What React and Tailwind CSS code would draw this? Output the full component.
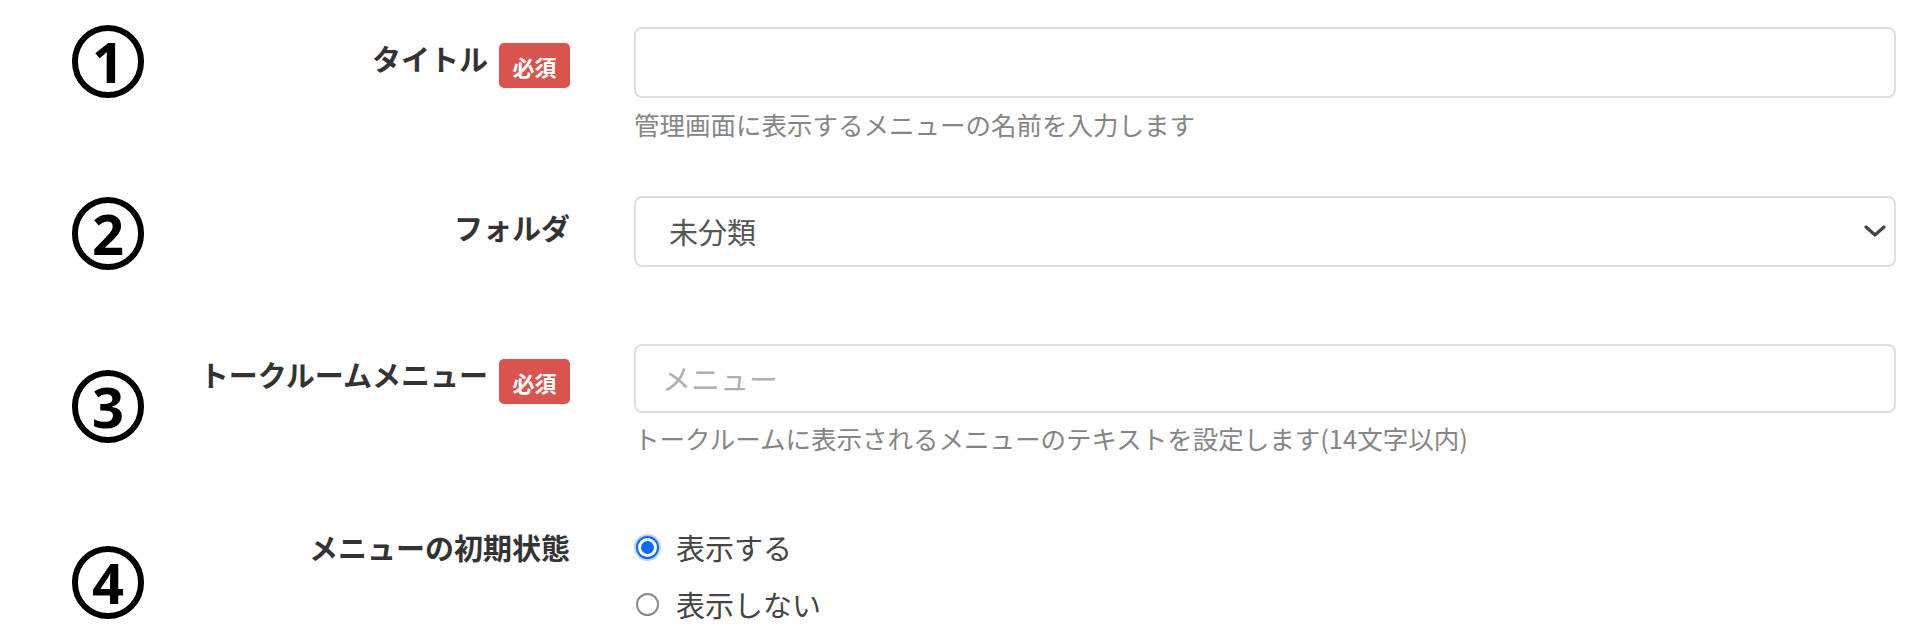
import React from 'react';

const jp = "font-['Noto_Sans_CJK_JP','Noto_Sans',sans-serif]";

// 丸数字（注釈）
function Num({ n, className }) {
    return (
        <div className={`w-[72px] h-[73px] shrink-0 rounded-full border-[6px] border-black flex items-center justify-center ${className}`}>
            <span className="text-[56px] font-bold leading-none text-black font-['Noto_Sans',sans-serif] -mt-[2px]">{n}</span>
        </div>
    );
}

function Label({ text, required, className = 'pt-[16px]' }) {
    return (
        <div className={`w-[426px] shrink-0 flex justify-end items-start gap-[11px] ${className}`}>
            <span className="text-[29px] font-bold leading-none text-[#333] mt-[1px]">{text}</span>
            {required && (
                <span className="w-[71px] h-[45px] shrink-0 rounded-[5px] bg-[#d9534f] text-white text-[22px] font-bold flex items-center justify-center leading-none">必須</span>
            )}
        </div>
    );
}

function Help({ children, className }) {
    return <p className={`text-[25.5px] leading-[30px] text-[#858585] ${className}`}>{children}</p>;
}

function Radio({ checked, label }) {
    return (
        <label className="h-[57px] flex items-center gap-[17px]">
            {checked ? (
                <span className="w-[23px] h-[23px] rounded-full border-2 border-[#0a6cf5] ring-2 ring-[#b8d5fd] bg-white flex items-center justify-center">
                    <span className="w-[13px] h-[13px] rounded-full bg-[#0a6cf5]" />
                </span>
            ) : (
                <span className="w-[23px] h-[23px] rounded-full border-2 border-[#8a8a8a] bg-white" />
            )}
            <span className="text-[29px] leading-none text-[#444]">{label}</span>
        </label>
    );
}

export default function App() {
    return (
        <div className={`w-[1920px] h-[633px] bg-white overflow-hidden pl-[72px] pr-[24px] ${jp}`}>
            {/* 1. タイトル */}
            <div className="flex mt-[27px]">
                <Num n="1" className="-mt-[2px]" />
                <Label text="タイトル" required />
                <div className="ml-[64px] flex-1">
                    <div className="h-[71px] rounded-[8px] border-2 border-[#dedede] bg-white" />
                    <Help className="mt-[11px]">管理画面に表示するメニューの名前を入力します</Help>
                </div>
            </div>

            {/* 2. フォルダ */}
            <div className="flex mt-[57px]">
                <Num n="2" className="mt-[1px]" />
                <Label text="フォルダ" />
                <div className="ml-[64px] flex-1">
                    <div className="h-[71px] rounded-[8px] border-2 border-[#dedede] bg-white flex items-center justify-between pl-[33px] pr-[8px]">
                        <span className="text-[29px] leading-none text-[#555]">未分類</span>
                        <svg width="22" height="13" viewBox="0 0 22 13" fill="none">
                            <polyline points="2,2 11,10 20,2" stroke="#444" strokeWidth="3.2" strokeLinecap="round" strokeLinejoin="round" />
                        </svg>
                    </div>
                </div>
            </div>

            {/* 3. トークルームメニュー */}
            <div className="flex mt-[74px]">
                <Num n="3" className="mt-[26px]" />
                <Label text="トークルームメニュー" required className="pt-[15px]" />
                <div className="ml-[64px] flex-1">
                    <div className="h-[69px] rounded-[8px] border-2 border-[#dedede] bg-white flex items-center pl-[26px]">
                        <span className="text-[29px] leading-none text-[#b0b0b0]">メニュー</span>
                    </div>
                    <Help className="mt-[10px]">トークルームに表示されるメニューのテキストを設定します(14文字以内)</Help>
                </div>
            </div>

            {/* 4. メニューの初期状態 */}
            <div className="flex mt-[66px]">
                <Num n="4" className="mt-[27px]" />
                <Label text="メニューの初期状態" className="pt-[13px]" />
                <div className="ml-[64px] flex-1 flex flex-col pl-[2px]">
                    <Radio checked label="表示する" />
                    <Radio label="表示しない" />
                </div>
            </div>
        </div>
    );
}
